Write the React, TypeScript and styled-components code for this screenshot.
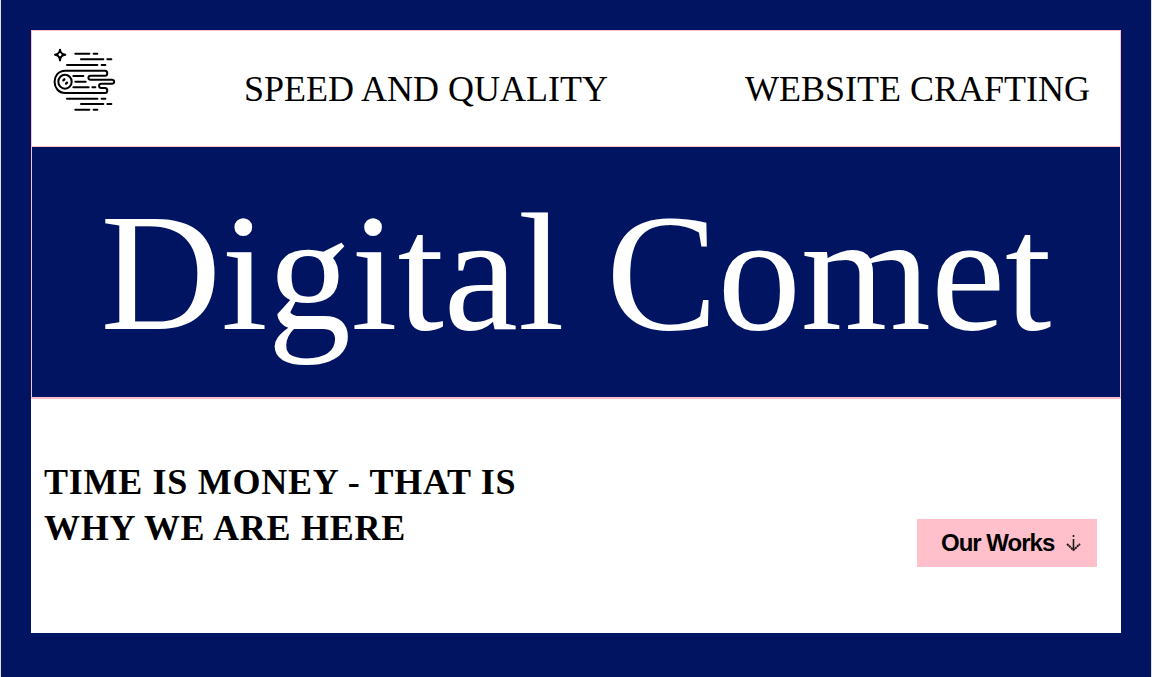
import React from "react";
import styled, { createGlobalStyle } from "styled-components";

const GlobalStyle = createGlobalStyle`
  * { box-sizing: border-box; }
  body {
    margin: 0;
    background: #001462;
    font-family: "Liberation Serif", "Times New Roman", serif;
    color: #000;
  }
`;

const Page = styled.div`
  min-height: 100vh;
  padding: 30px 30px 44px;
  background: #001462;
  border: solid #dfe0dc;
  border-width: 0 1px;
`;

const Frame = styled.main`
  background: #fff;
`;

const Header = styled.header`
  display: flex;
  align-items: center;
  height: 116px;
  padding: 0 30px 0 20px;
  border: 1px solid pink;
  border-bottom: 0;
`;

const LogoLink = styled.a`
  display: block;
  flex: none;
  width: 64px;
  height: 64px;
  margin-bottom: 20px;
`;

const Taglines = styled.div`
  display: flex;
  flex: 1;
  justify-content: space-between;
  margin-left: 128px;
`;

const Tagline = styled.p`
  margin: 0;
  font-size: 36px;
  line-height: 42px;
  white-space: nowrap;
`;

const Hero = styled.section`
  padding: 29px 0 28px;
  border: 1px solid pink;
  border-bottom-width: 2px;
  background: #001462;
  text-align: center;
`;

const Title = styled.h1`
  margin: 0;
  color: #fff;
  font-size: 167px;
  font-weight: 400;
  line-height: 193px;
  white-space: nowrap;
`;

const Intro = styled.section`
  display: flex;
  align-items: flex-end;
  justify-content: space-between;
  padding: 60px 24px 66px 13px;
`;

const Slogan = styled.h2`
  width: 50%;
  margin: 0 0 16px;
  font-size: 36px;
  font-weight: 700;
  letter-spacing: 0.02em;
  line-height: 46px;
`;

const WorksButton = styled.button`
  display: flex;
  align-items: center;
  justify-content: space-between;
  width: 180px;
  height: 48px;
  padding: 0 16px 0 24px;
  border: 0;
  background: pink;
  color: #000;
  font-family: "Liberation Sans", Arial, sans-serif;
  font-size: 24px;
  font-weight: 700;
  letter-spacing: -1px;
  white-space: nowrap;
`;

const CometLogo = () => (
  <svg
    width="64"
    height="64"
    viewBox="24 21 192 192"
    fill="none"
    stroke="#000"
    strokeWidth="6"
    strokeLinecap="round"
    strokeLinejoin="round"
    aria-hidden="true"
  >
    <path d="M48 29Q49 43 64 44Q49 45 48 61Q47 45 33 44Q47 43 48 29Z" />
    <circle cx="48" cy="44" r="4" fill="#fff" stroke="none" />
    <path d="M94 41H136M149 41H160M111 58H178M190 58H202M69 75H160M173 75H184" />
    <path d="M69 176H160M173 176H184M111 192H178M190 192H202M94 209H136M149 209H160" />
    <path d="M64 92H183C192 92 192 107 183 107H140C131 107 131 119 140 119H203C213 119 213 131 203 131H172C163 131 163 144 172 144H183C192 144 192 159 183 159H64C21 159 21 92 64 92Z" />
    <ellipse cx="63" cy="125" rx="20" ry="21" />
    <path d="M88 108H118M94 125H125M88 142H134M145 142H154" />
    <path d="M58 121L61 118M66 131L69 128" strokeWidth="7" />
  </svg>
);

const DownArrow = () => (
  <svg width="16" height="20" viewBox="0 0 16 20" fill="none" stroke="#201819" aria-hidden="true">
    <path d="M8.5 2V4M8.5 6V17" strokeWidth="1.6" />
    <path d="M2 11L8.5 17L15 11" strokeWidth="2" strokeDasharray="2.2 0.5" />
  </svg>
);

export default function App() {
  return (
    <>
      <GlobalStyle />
      <Page>
        <Frame>
          <Header>
            <LogoLink href="#" aria-label="Digital Comet home">
              <CometLogo />
            </LogoLink>
            <Taglines>
              <Tagline>SPEED AND QUALITY</Tagline>
              <Tagline>WEBSITE CRAFTING</Tagline>
            </Taglines>
          </Header>
          <Hero>
            <Title>Digital Comet</Title>
          </Hero>
          <Intro>
            <Slogan>TIME IS MONEY - THAT IS WHY WE ARE HERE</Slogan>
            <WorksButton type="button">
              Our Works
              <DownArrow />
            </WorksButton>
          </Intro>
        </Frame>
      </Page>
    </>
  );
}
